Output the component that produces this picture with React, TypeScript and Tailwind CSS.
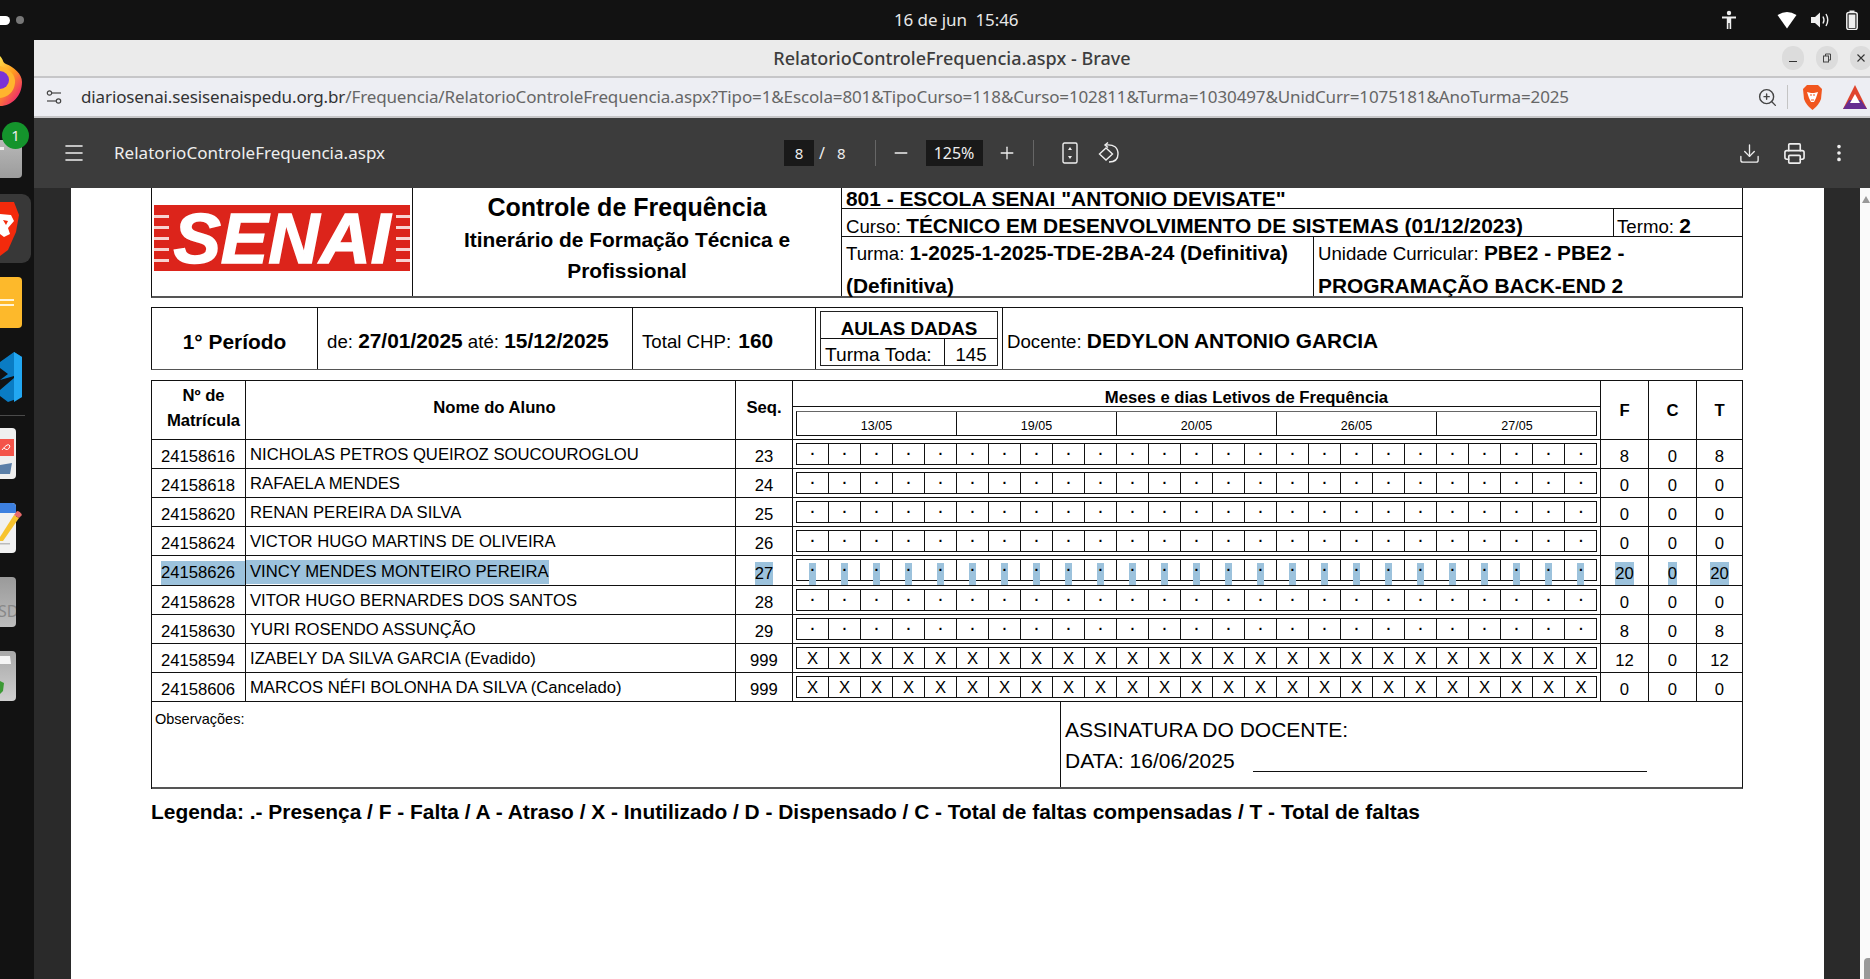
import { Download, Printer, EllipsisVertical, Minus, Plus, Menu, ZoomIn } from "lucide-react";

type Student = { id: string; name: string; seq: string; mark: string; f: string; c: string; t: string; selected?: boolean };

const students: Student[] = [
  { id: "24158616", name: "NICHOLAS PETROS QUEIROZ SOUCOUROGLOU", seq: "23", mark: ".", f: "8", c: "0", t: "8" },
  { id: "24158618", name: "RAFAELA MENDES", seq: "24", mark: ".", f: "0", c: "0", t: "0" },
  { id: "24158620", name: "RENAN PEREIRA DA SILVA", seq: "25", mark: ".", f: "0", c: "0", t: "0" },
  { id: "24158624", name: "VICTOR HUGO MARTINS DE OLIVEIRA", seq: "26", mark: ".", f: "0", c: "0", t: "0" },
  { id: "24158626", name: "VINCY MENDES MONTEIRO PEREIRA", seq: "27", mark: ".", f: "20", c: "0", t: "20", selected: true },
  { id: "24158628", name: "VITOR HUGO BERNARDES DOS SANTOS", seq: "28", mark: ".", f: "0", c: "0", t: "0" },
  { id: "24158630", name: "YURI ROSENDO ASSUNÇÃO", seq: "29", mark: ".", f: "8", c: "0", t: "8" },
  { id: "24158594", name: "IZABELY DA SILVA GARCIA (Evadido)", seq: "999", mark: "X", f: "12", c: "0", t: "12" },
  { id: "24158606", name: "MARCOS NÉFI BOLONHA DA SILVA (Cancelado)", seq: "999", mark: "X", f: "0", c: "0", t: "0" },
];

const dates = ["13/05", "19/05", "20/05", "26/05", "27/05"];
const slots = Array.from({ length: 25 }, (_, i) => i);

function Dock() {
  return (
    <div className="w-[34px] shrink-0 flex flex-col overflow-hidden">
      <svg width="34" height="52" viewBox="0 0 34 52" className="mt-[14px] shrink-0">
        <defs>
          <linearGradient id="fx" x1="0" y1="0" x2="0.6" y2="1">
            <stop offset="0" stopColor="#ffe14d" />
            <stop offset="0.5" stopColor="#ff9a1f" />
            <stop offset="1" stopColor="#f0266f" />
          </linearGradient>
        </defs>
        <path d="M0 2 C4 6 2 8 6 10 C14 13 22 20 22 28 C22 42 12 52 0 52 Z" fill="url(#fx)" />
        <path d="M0 12 C8 14 16 20 15 29 C14 38 8 43 0 44 Z" fill="#ffb52e" />
        <circle cx="0" cy="26" r="9" fill="#7b32d6" />
      </svg>
      <div className="relative mt-[34px] h-[38px] w-[22px] shrink-0 rounded-r-[4px] bg-gradient-to-b from-[#b8b8b8] to-[#9c9c9c]">
        <div className="absolute top-[7px] left-0 h-[3px] w-[4px] bg-[#eee]" />
        <div className="absolute -top-[18px] left-[2px] flex h-[27px] w-[27px] items-center justify-center rounded-full bg-[#14942c] text-[15px] text-[#eee] font-['Noto_Sans',sans-serif]">1</div>
      </div>
      <div className="mt-[16px] flex h-[69px] w-[31px] shrink-0 items-center rounded-r-[9px] bg-[#383838]">
        <svg width="21" height="56" viewBox="0 0 21 56">
          <path d="M0 1 H14 L19 14 L16 31 L8 49 L0 55 Z" fill="#f32a0c" />
          <path d="M0 13 L11 14 L14 20 L8 27 L10 33 L4 36 L0 33 Z M3 19 L8 20 L6 24 Z" fill="#fff" fillRule="evenodd" />
        </svg>
      </div>
      <div className="mt-[14px] flex h-[51px] w-[22px] shrink-0 flex-col justify-center gap-[3px] rounded-r-[4px] bg-[#fdb92b]">
        <div className="h-[2px] w-[14px] bg-[#fff3d6]" />
        <div className="h-[2px] w-[14px] bg-[#fff3d6]" />
      </div>
      <svg width="22" height="50" viewBox="0 0 22 50" className="mt-[24px] shrink-0">
        <path d="M0 28 L8 22 L0 16 V10 L14 0 L22 5 V45 L8 50 L0 44 V38 L14 26 V24 Z" fill="#0a7cc4" />
        <path d="M14 0 L22 5 V45 L14 50 Z" fill="#22a7f2" />
      </svg>
      <div className="mt-[13px] h-px w-[25px] shrink-0 bg-[#4a4a4a]" />
      <svg width="16" height="51" viewBox="0 0 16 51" className="mt-[12px] shrink-0">
        <path d="M0 0 H12 Q16 0 16 4 V47 Q16 51 12 51 H0 Z" fill="#efefef" />
        <rect x="0" y="11" width="14" height="17" fill="#f4544a" />
        <path d="M2 22 Q8 14 10 18 Q8 24 4 20" stroke="#fff" strokeWidth="1" fill="none" />
        <path d="M0 37 L12 35 L10 46 L0 46 Z" fill="#5b7fa8" />
      </svg>
      <svg width="23" height="50" viewBox="0 0 23 50" className="mt-[24px] shrink-0">
        <path d="M0 0 H12 Q16 0 16 4 V46 Q16 50 12 50 H0 Z" fill="#f1f1f1" />
        <path d="M0 0 H12 Q16 0 16 4 V10 H0 Z" fill="#3d80e0" />
        <rect x="0" y="40" width="10" height="1.5" fill="#bbb" />
        <path d="M0 34 L14 12 L19 15 L3 38 L0 38 Z" fill="#f7c32e" />
        <path d="M14 12 L17 8 Q20 8 22 12 L19 15 Z" fill="#e86a6a" />
      </svg>
      <div className="mt-[24px] flex h-[50px] w-[16px] shrink-0 items-end overflow-hidden rounded-r-[4px] bg-gradient-to-b from-[#9a9a9a] to-[#bdbdbd] pb-[7px] text-[16px] leading-[18px] text-[#888] font-['Noto_Sans',sans-serif]">
        <span className="-ml-[2px]">SD</span>
      </div>
      <svg width="16" height="50" viewBox="0 0 16 50" className="mt-[24px] shrink-0">
        <defs>
          <linearGradient id="tr" x1="0" y1="0" x2="0" y2="1">
            <stop offset="0" stopColor="#a8a8a8" />
            <stop offset="1" stopColor="#d0d0d0" />
          </linearGradient>
        </defs>
        <path d="M0 0 H12 Q16 0 16 4 V46 Q16 50 12 50 H0 Z" fill="url(#tr)" />
        <path d="M0 5 H10 L11 13 H0 Z" fill="#f5f5f5" />
        <path d="M0 30 L4 32 L3 40 L0 43 Z" fill="#3c9a35" />
      </svg>
    </div>
  );
}

function TopBar() {
  return (
    <div className="relative flex h-10 shrink-0 items-center bg-[#121212] text-white">
      <div className="h-[9px] w-[10px] rounded-r-full bg-white" />
      <div className="ml-[6px] h-[8px] w-[8px] rounded-full bg-[#777]" />
      <div className="absolute left-[894px] text-[17px] tracking-[-0.1px] text-[#e8e8e8] font-['Noto_Sans',sans-serif]">16 de jun&nbsp;&nbsp;15:46</div>
      <div className="ml-auto flex items-center">
        <svg width="16" height="20" viewBox="0 0 16 20" fill="#eee">
          <circle cx="8" cy="3" r="2.2" />
          <path d="M1 6.5 H15 V8.5 H10.2 V19 H8.6 V13 H7.4 V19 H5.8 V8.5 H1 Z" />
        </svg>
        <svg width="20" height="18" viewBox="0 0 20 18" fill="#fff" className="ml-[40px]">
          <path d="M0.5 4 Q10 -2 19.5 4 L10 17.5 Z" />
        </svg>
        <svg width="20" height="18" viewBox="0 0 20 18" fill="none" stroke="#eee" className="ml-[13px]">
          <path d="M1 6 H5 L10 1.5 V16.5 L5 12 H1 Z" fill="#eee" stroke="none" />
          <path d="M13 5.5 Q15 9 13 12.5" strokeWidth="1.4" />
          <path d="M16 3 Q19.5 9 16 15" strokeWidth="1.4" />
        </svg>
        <svg width="12" height="20" viewBox="0 0 12 20" fill="none" className="ml-[16px] mr-[12px]">
          <rect x="0.8" y="2.5" width="10.4" height="17" rx="2" stroke="#eee" strokeWidth="1.5" />
          <rect x="3.5" y="0.5" width="5" height="2" fill="#eee" />
          <rect x="2.6" y="4.5" width="6.8" height="13.5" fill="#eee" />
        </svg>
      </div>
    </div>
  );
}

function TitleBar() {
  return (
    <div className="relative flex h-[36px] shrink-0 items-center justify-center bg-[#ebebeb]">
      <span className="text-[18px] font-medium tracking-[0.03px] text-[#3d3d3d] font-['Noto_Sans',sans-serif]">RelatorioControleFrequencia.aspx - Brave</span>
      <div className="absolute right-[-2px] top-[6px] flex gap-[12px]">
        <div className="flex h-[24px] w-[22px] items-center justify-center rounded-full bg-[#dcdcdc]"><div className="mt-[6px] h-px w-[8px] bg-[#333]" /></div>
        <div className="flex h-[24px] w-[22px] items-center justify-center rounded-full bg-[#dcdcdc]">
          <svg width="10" height="10" viewBox="0 0 10 10" fill="none" stroke="#444"><rect x="1.5" y="3" width="5" height="6" /><path d="M3.5 3 V1 H8.5 V7 H6.5" /></svg>
        </div>
        <div className="flex h-[24px] w-[22px] items-center justify-center rounded-full bg-[#dcdcdc]">
          <svg width="10" height="10" viewBox="0 0 10 10" stroke="#333" strokeWidth="1.1"><path d="M1.5 1.5 L8.5 8.5 M8.5 1.5 L1.5 8.5" /></svg>
        </div>
      </div>
    </div>
  );
}

function UrlBar() {
  return (
    <div className="flex h-[42px] shrink-0 items-center border-y-2 border-y-[#c6c6c8] bg-[#edeef3] pl-[12px]">
      <svg width="16" height="16" viewBox="0 0 16 16" fill="none" stroke="#444" strokeWidth="1.2">
        <circle cx="3.5" cy="4" r="2.2" />
        <path d="M6 4 H15" />
        <circle cx="12.5" cy="12" r="2.2" />
        <path d="M1 12 H10" />
      </svg>
      <div className="ml-[19px] text-[17px] tracking-[-0.13px] whitespace-nowrap text-[#666] font-['Noto_Sans',sans-serif]">
        <span className="text-[#333]">diariosenai.sesisenaispedu.org.br</span>/Frequencia/RelatorioControleFrequencia.aspx?Tipo=1&amp;Escola=801&amp;TipoCurso=118&amp;Curso=102811&amp;Turma=1030497&amp;UnidCurr=1075181&amp;AnoTurma=2025
      </div>
      <div className="ml-auto flex items-center">
        <ZoomIn size={21} strokeWidth={1.6} color="#444" />
        <div className="ml-[9px] h-[24px] w-px bg-[#c4c4c4]" />
        <svg width="21" height="25" viewBox="0 0 21 25" className="ml-[14px]">
          <path d="M5 0 H16 L20 4 L19 14 Q17 20 10.5 25 Q4 20 2 14 L1 4 Z" fill="#f1561e" />
          <path d="M5 7 L9 8 H12 L16 7 L14 13 L12 17 H9 L7 13 Z" fill="#fff" />
          <path d="M8 10 H10 M11 10 H13 M9 15 H12" stroke="#f1561e" strokeWidth="1.2" />
        </svg>
        <svg width="24" height="24" viewBox="0 0 24 24" className="ml-[20px] mr-[3px]">
          <path d="M12 0 L24 24 H0 Z" fill="#e0452d" />
          <path d="M0 24 L6 15 H18 L24 24 Z" fill="#662d91" />
          <path d="M12 9 L17 18 H7 Z" fill="#fff" />
        </svg>
      </div>
    </div>
  );
}

function PdfToolbar() {
  return (
    <div className="flex h-[70px] shrink-0 items-center bg-[#3c3c3c] text-[#eee] font-['Noto_Sans',sans-serif]">
      <Menu size={24} strokeWidth={1.6} className="ml-[28px]" />
      <span className="ml-[28px] w-[271px] text-[17px] tracking-[0.02px] whitespace-nowrap">RelatorioControleFrequencia.aspx</span>
      <div className="ml-[399px] flex h-[26px] w-[30px] items-center justify-center bg-[#191919] text-[15px]">8</div>
      <span className="ml-[5px] text-[16px]">/</span>
      <span className="ml-[12px] text-[15px]">8</span>
      <div className="ml-[29px] h-[26px] w-px bg-[#666]" />
      <Minus size={20} strokeWidth={1.6} className="ml-[15px]" />
      <div className="ml-[15px] flex h-[26px] w-[57px] items-center justify-center bg-[#191919] text-[16px]">125%</div>
      <Plus size={20} strokeWidth={1.6} className="ml-[14px]" />
      <div className="ml-[16px] h-[26px] w-px bg-[#666]" />
      <svg width="16" height="22" viewBox="0 0 16 22" fill="none" stroke="#eee" strokeWidth="1.4" className="ml-[28px]">
        <rect x="1" y="1" width="14" height="20" rx="1.5" />
        <path d="M8 5 L6 8 H10 Z M8 17 L6 14 H10 Z" fill="#eee" stroke="none" />
      </svg>
      <svg width="22" height="22" viewBox="0 0 22 22" fill="none" stroke="#eee" strokeWidth="1.4" className="ml-[20px]">
        <path d="M1.5 12 L8 6 L14.5 12 L8 18 Z" />
        <path d="M8 3 Q20 2 20 12 Q20 20 11 20" />
        <path d="M10 0.5 L7 3 L10 5.5" />
      </svg>
      <Download size={23} strokeWidth={1.4} className="ml-[618px]" />
      <Printer size={23} strokeWidth={1.7} className="ml-[22px]" />
      <EllipsisVertical size={22} strokeWidth={2} className="ml-[22px]" />
    </div>
  );
}

function SenaiLogo() {
  return (
    <div className="relative flex h-[66px] w-[256px] items-center justify-center bg-[#dc241b]">
      <div className="absolute inset-y-0 left-0 flex w-[15px] flex-col justify-center gap-[8px]">
        <div className="h-[3px] bg-white opacity-80" /><div className="h-[3px] bg-white opacity-80" /><div className="h-[3px] bg-white opacity-80" /><div className="h-[3px] bg-white opacity-80" /><div className="h-[3px] bg-white opacity-80" />
      </div>
      <div className="absolute inset-y-0 right-0 flex w-[14px] flex-col justify-center gap-[8px]">
        <div className="h-[3px] bg-white opacity-80" /><div className="h-[3px] bg-white opacity-80" /><div className="h-[3px] bg-white opacity-80" /><div className="h-[3px] bg-white opacity-80" /><div className="h-[3px] bg-white opacity-80" />
      </div>
      <span className="mt-[1px] text-[71px] leading-[66px] font-bold italic text-white [-webkit-text-stroke:1.5px_white]">SENAI</span>
    </div>
  );
}

function HeaderTable() {
  return (
    <div className="flex h-[110px] w-[1592px] border-x border-b-2 border-x-[#111] border-b-[#555]">
      <div className="w-[261px] shrink-0 border-r border-[#111] pl-[2px] pt-[17px]">
        <SenaiLogo />
      </div>
      <div className="w-[429px] shrink-0 border-r border-[#111] text-center font-bold">
        <div className="mt-[3px] text-[25px] leading-[32px]">Controle de Frequência</div>
        <div className="mt-[1px] text-[20.9px] leading-[31px]">Itinerário de Formação Técnica e</div>
        <div className="text-[20.9px] leading-[31px]">Profissional</div>
      </div>
      <div className="flex min-w-0 flex-1 flex-col">
        <div className="h-[21px] border-b border-[#111] pl-[4px] text-[20.9px] leading-[21px] font-bold whitespace-nowrap">801 - ESCOLA SENAI "ANTONIO DEVISATE"</div>
        <div className="flex h-[28px] border-b border-[#111] text-[18.67px] leading-[21px]">
          <div className="w-[772px] shrink-0 border-r border-[#111] pl-[4px] pt-[6px] whitespace-nowrap">Curso: <b className="text-[20.9px]">TÉCNICO EM DESENVOLVIMENTO DE SISTEMAS (01/12/2023)</b></div>
          <div className="pl-[3px] pt-[6px]">Termo: <b className="text-[20.9px]">2</b></div>
        </div>
        <div className="flex min-h-0 flex-1 text-[18.67px] leading-[32px]">
          <div className="w-[472px] shrink-0 border-r border-[#111] pl-[4px]">
            Turma: <b className="text-[20.9px]">1-2025-1-2025-TDE-2BA-24 (Definitiva) (Definitiva)</b>
          </div>
          <div className="pl-[4px]">
            Unidade Curricular: <b className="text-[20.9px]">PBE2 - PBE2 -<br />PROGRAMAÇÃO BACK-END 2</b>
          </div>
        </div>
      </div>
    </div>
  );
}

function SummaryTable() {
  return (
    <div className="mt-[9px] flex h-[63px] w-[1592px] border border-[#111] border-b-[#555] text-[18.67px]">
      <div className="flex w-[166px] shrink-0 items-center justify-center border-r border-[#111] pt-[6px] text-[20.9px] font-bold">1° Período</div>
      <div className="flex w-[315px] shrink-0 items-center border-r border-[#111] pl-[9px] pt-[5px]">
        <span>de: <b className="text-[20.9px]">27/01/2025</b> até: <b className="text-[20.9px]">15/12/2025</b></span>
      </div>
      <div className="flex w-[183px] shrink-0 items-center border-r border-[#111] pl-[9px] pt-[5px]">
        <span>Total CHP: <b className="ml-[2px] text-[20.9px]">160</b></span>
      </div>
      <div className="flex w-[187px] shrink-0 items-center justify-center border-r border-[#111]">
        <div className="flex h-[55px] w-[178px] flex-col border border-[#222]">
          <div className="h-[27px] border-b border-[#111] pt-[3px] text-center text-[18.8px] leading-[27px] font-bold">AULAS DADAS</div>
          <div className="flex min-h-0 flex-1 leading-[22px]">
            <div className="w-[124px] border-r border-[#111] pl-[4px] pt-[5px] text-[19.2px]">Turma Toda:</div>
            <div className="flex-1 pt-[5px] text-center">145</div>
          </div>
        </div>
      </div>
      <div className="flex flex-1 items-center pl-[4px] pt-[5px]">
        <span>Docente: <b className="text-[20.9px]">DEDYLON ANTONIO GARCIA</b></span>
      </div>
    </div>
  );
}

function NumCell({ width, value, selected }: { width: string; value: string; selected?: boolean }) {
  return (
    <div className={`${width} flex shrink-0 items-center justify-center border-r border-[#111] pt-[5px]`}>
      {selected ? <span className="bg-[#9cc2dc] leading-[23px]">{value}</span> : value}
    </div>
  );
}

function StudentRow({ s }: { s: Student }) {
  return (
    <div className={`flex ${s.selected ? "h-[30px]" : "h-[29px]"} border-b border-[#111]`}>
      <div className="flex w-[94px] shrink-0 items-center border-r border-[#111] pl-[9px] pt-[5px]">
        {s.selected ? <span className="-mt-[1px] flex-1 bg-[#9cc2dc] leading-[24px]">{s.id}</span> : s.id}
      </div>
      <div className="flex w-[490px] shrink-0 items-center border-r border-[#111] pt-[1px] whitespace-nowrap">
        {s.selected ? <span className="mt-[1px] bg-[#9cc2dc] pl-[4px] leading-[24px]">{s.name}</span> : <span className="pl-[4px]">{s.name}</span>}
      </div>
      <NumCell width="w-[57px]" value={s.seq} selected={s.selected} />
      <div className="w-[808px] shrink-0 border-r border-[#111] pl-[3px] pt-[3px]">
        <div className="flex h-[22px] w-[801px] border border-[#111]">
          {slots.map((i) => (
            <div key={i} className={`relative flex w-[32px] shrink-0 items-center justify-center ${i < 24 ? "border-r border-[#111]" : ""} ${s.mark === "." ? "pb-[8px] text-[14px] font-bold" : ""}`}>
              {s.selected && <span className="absolute top-[3px] left-[12px] h-[23px] w-[7px] border-b border-[#111] bg-[#9cc2dc]" />}
              {s.selected && <span className="absolute top-[25px] left-[11px] h-px w-[9px] bg-[#111]" />}
              <span className="relative">{s.mark}</span>
            </div>
          ))}
        </div>
      </div>
      <NumCell width="w-[48px]" value={s.f} selected={s.selected} />
      <NumCell width="w-[48px]" value={s.c} selected={s.selected} />
      <NumCell width="w-[46px]" value={s.t} selected={s.selected} />
    </div>
  );
}

function AttendanceTable() {
  return (
    <div className="mt-[10px] w-[1592px] border-l border-t border-[#111] text-[16.67px]">
      <div className="flex h-[59px] border-b border-[#111] font-bold">
        <div className="flex w-[94px] shrink-0 items-center justify-center border-r border-[#111] pb-[5px] pl-[10px] text-center leading-[25px]">Nº de<br />Matrícula</div>
        <div className="flex w-[490px] shrink-0 items-center justify-center border-r border-[#111] pb-[6px] pl-[8px]">Nome do Aluno</div>
        <div className="flex w-[57px] shrink-0 items-center justify-center border-r border-[#111] pb-[6px]">Seq.</div>
        <div className="w-[808px] shrink-0 border-r border-[#111]">
          <div className="h-[26px] border-b border-[#111] pl-[100px] text-center leading-[34px] whitespace-nowrap">Meses e dias Letivos de Frequência</div>
          <div className="ml-[3px] mt-[4px] flex h-[25px] w-[801px] border border-[#111] border-t-[#666] font-normal">
            {dates.map((d, i) => (
              <div key={d} className={`flex w-[160px] shrink-0 items-end justify-center pb-[1px] text-[12.5px] leading-[16px] ${i < 4 ? "border-r border-[#111]" : ""}`}>{d}</div>
            ))}
          </div>
        </div>
        <div className="flex w-[48px] shrink-0 items-center justify-center border-r border-[#111]">F</div>
        <div className="flex w-[48px] shrink-0 items-center justify-center border-r border-[#111]">C</div>
        <div className="flex w-[46px] shrink-0 items-center justify-center border-r border-[#111]">T</div>
      </div>
      {students.map((s) => (
        <StudentRow key={s.id} s={s} />
      ))}
      <div className="flex h-[87px] border-b-2 border-r border-r-[#111] border-b-[#555]">
        <div className="w-[909px] shrink-0 border-r border-[#111] pl-[3px] pt-[8px] text-[14.5px] leading-[18px]">Observações:</div>
        <div className="pl-[4px] pt-[12px] text-[21px] leading-[31px]">
          <div>ASSINATURA DO DOCENTE:</div>
          <div className="flex items-start">DATA: 16/06/2025<div className="ml-[18px] mt-[26px] h-px w-[394px] bg-[#111]" /></div>
        </div>
      </div>
    </div>
  );
}

function PdfView() {
  return (
    <div className="flex min-h-0 flex-1">
      <div className="w-[37px] shrink-0 bg-[#2a2a2a]" />
      <div className="w-[1753px] shrink-0 overflow-hidden bg-white pl-[80px] text-black font-['Liberation_Sans',Arial,sans-serif]">
        <HeaderTable />
        <SummaryTable />
        <AttendanceTable />
        <p className="mt-[11px] text-[20.92px] leading-[24px] font-bold whitespace-nowrap">Legenda: .- Presença / F - Falta / A - Atraso / X - Inutilizado / D - Dispensado / C - Total de faltas compensadas / T - Total de faltas</p>
      </div>
      <div className="w-[36px] shrink-0 bg-[#2a2a2a]" />
      <div className="flex flex-1 flex-col items-end justify-between bg-[#fafafa]">
        <div className="mt-[8px] h-0 w-0 border-x-[4px] border-b-[7px] border-x-transparent border-b-[#999]" />
        <div className="h-[21px] w-[6px] rounded-tl-[4px] bg-[#999]" />
      </div>
    </div>
  );
}

export default function App() {
  return (
    <div className="flex h-[979px] w-[1870px] flex-col overflow-hidden bg-[#121212]">
      <TopBar />
      <div className="flex min-h-0 flex-1">
        <Dock />
        <div className="flex min-w-0 flex-1 flex-col">
          <TitleBar />
          <UrlBar />
          <PdfToolbar />
          <PdfView />
        </div>
      </div>
    </div>
  );
}
